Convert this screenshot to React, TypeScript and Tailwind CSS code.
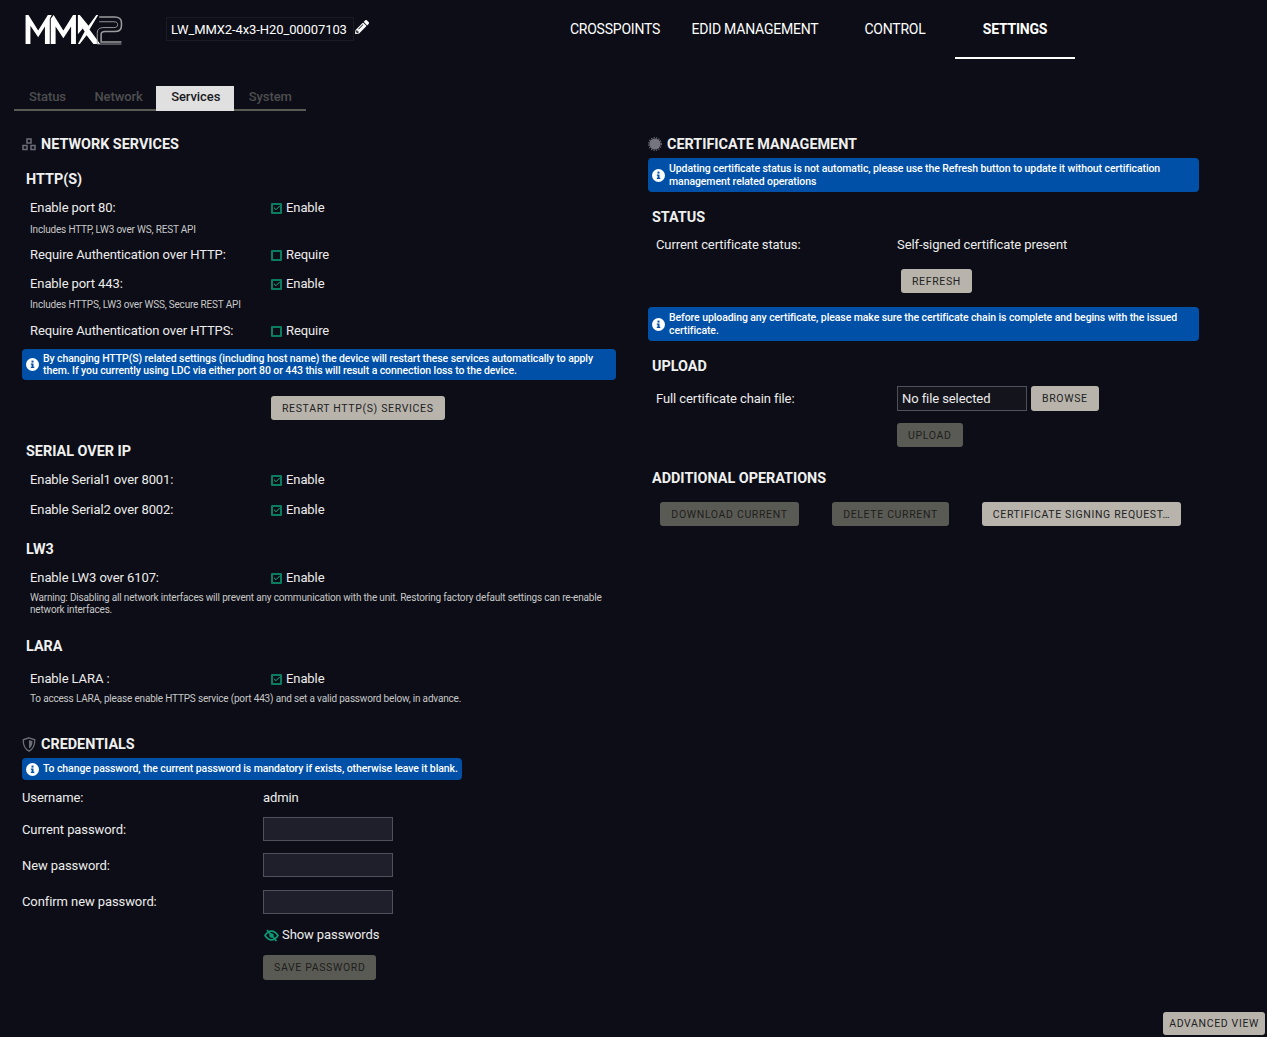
import React from 'react';
import { Check } from 'lucide-react';
import { FaPencilAlt } from 'react-icons/fa';

const NAV = [
  { label: 'CROSSPOINTS', cls: 'w-[140px]' },
  { label: 'EDID MANAGEMENT', cls: 'w-[140px]' },
  { label: 'CONTROL', cls: 'w-[130px] pl-[10px]' },
  { label: 'SETTINGS', cls: 'w-[120px] font-bold border-b-white' },
];

const TABS = ['Status', 'Network', 'Services', 'System'];

const Logo = () => (
  <svg width="100" height="31" viewBox="0 0 100 32" className="block">
    <path d="M0 31V1h3l10 16L23 1h4l-2 4v26h-5V13l-7 11-8-12v19z" fill="#fff" />
    <path d="M26 31V5l3-4 10 16L49 1h3v30h-5V13l-8 12-8-12v18z" fill="#fff" />
    <path d="M50 1h6l9 11 8-11h2L66 16l11 15h-7l-7-9-7 9h-2l7-13-2-3-5 6V1z" fill="#fff" />
    <path d="M76 3h16c5 0 7 2 7 6v3c0 4-2 6-7 6H82c-3 0-4 1-4 3v8h21" fill="none" stroke="#9a9a9f" strokeWidth="1.6" />
    <path d="M76 8h15c3 0 4 1 4 3s-1 3-4 3H81c-5 0-7 2-7 6v11h25" fill="none" stroke="#9a9a9f" strokeWidth="1" />
  </svg>
);

const NetworkIcon = () => (
  <svg width="14" height="14" viewBox="0 0 14 14" className="shrink-0" fill="none" stroke="#6b6d78" strokeWidth="1.5">
    <rect x="5" y="2" width="4" height="4" />
    <rect x="1" y="8.500" width="4" height="4" />
    <rect x="9" y="8.500" width="4" height="4" />
  </svg>
);

const ShieldIcon = () => (
  <svg width="14" height="15" viewBox="0 0 14 15" className="shrink-0">
    <path d="M7 .8l5.800 2c0 5-1.200 9.200-5.800 11.400C2.400 12 1.200 7.800 1.200 2.800z" fill="none" stroke="#6b6d78" strokeWidth="1.300" />
    <path d="M7 3l3.500 1.200C10.500 7.500 9.700 10 7 11.500z" fill="#6b6d78" />
  </svg>
);

const GearIcon = () => (
  <svg width="14" height="14" viewBox="0 0 14 14" className="shrink-0">
    <circle cx="7" cy="7" r="5.600" fill="#74757f" />
    <circle cx="7" cy="7" r="6.300" fill="none" stroke="#74757f" strokeWidth="1.200" strokeDasharray="1.200 1.300" />
  </svg>
);

const InfoDot = () => (
  <svg width="13" height="13" viewBox="0 0 13 13" className="shrink-0 mr-1">
    <circle cx="6.500" cy="6.500" r="6.500" fill="#fff" />
    <rect x="5.500" y="2.600" width="2" height="2" fill="#0050a8" />
    <path d="M4.800 5.500h2.700v3.300h.8v1.200H4.800V8.800h.8V6.700h-.8z" fill="#0050a8" />
  </svg>
);

const EyeSlash = () => (
  <svg width="15" height="13" viewBox="0 0 15 13" className="shrink-0">
    <path d="M1 6.500C3 3.500 5 2.200 7.500 2.200S12 3.500 14 6.500c-2 3-4 4.300-6.500 4.300S3 9.500 1 6.500z" fill="none" stroke="#0d9b74" strokeWidth="1.700" />
    <circle cx="7.500" cy="6.500" r="2.200" fill="#0d9b74" />
    <path d="M3 1l9.500 11" stroke="#0d9b74" strokeWidth="1.700" />
  </svg>
);

const CheckRow = ({ label, hint, text, checked, className = '', hintClass = 'mt-[6px]' }: { label: string; hint?: string; text: string; checked?: boolean; className?: string; hintClass?: string }) => (
  <div className={className}>
    <div className="flex items-center h-5 pl-2">
      <span className="w-[241px] shrink-0">{label}</span>
      <span className="w-[11px] h-[11px] border-2 border-[#0a7d60] rounded-[1px] flex items-center justify-center">
        {checked && <Check size={8} strokeWidth={3} color="#14b88a" className="shrink-0" />}
      </span>
      <span className="ml-[4px]">{text}</span>
    </div>
    {hint && <div className={`pl-2 text-[10px] leading-3 text-[#c8c8c8] tracking-[-0.18px] ${hintClass}`}>{hint}</div>}
  </div>
);

const Note = ({ children, className = '' }: { children: React.ReactNode; className?: string }) => (
  <div className={`flex items-center bg-[#0050a8] rounded-[4px] px-1 text-[10.500px] text-white font-medium tracking-[-0.09px] ${className}`}>
    <InfoDot />
    <span>{children}</span>
  </div>
);

const Btn = ({ children, disabled, className = '' }: { children: React.ReactNode; disabled?: boolean; className?: string }) => (
  <div className={`inline-flex items-center justify-center h-6 rounded-[3px] pt-px px-[11px] text-[10.500px] tracking-[0.65px] whitespace-nowrap ${disabled ? 'bg-[#5a5a54] text-[#1e1e1c]' : 'bg-[#b8b4ac] text-[#22221f]'} ${className}`}>
    {children}
  </div>
);

const Heading = ({ children, className = '' }: { children: React.ReactNode; className?: string }) => (
  <div className={`h-5 text-[14.400px] leading-[22px] font-bold tracking-normal text-[#f0f0f0] ${className}`}>{children}</div>
);

const PasswordRow = ({ label, className = '', labelClass = '' }: { label: string; className?: string; labelClass?: string }) => (
  <div className={`flex items-center h-6 ${className}`}>
    <span className={`w-[241px] shrink-0 ${labelClass}`}>{label}</span>
    <div className="w-[130px] h-6 bg-[#1e1f2b] border border-[#50505c]" />
  </div>
);

export default function App() {
  return (
    <div className="relative w-[1267px] h-[1037px] overflow-hidden bg-[#0c0d16] text-[#ececec] text-[13px] tracking-[-0.09px]" style={{ fontFamily: 'Roboto, sans-serif' }}>
      {/* top bar */}
      <header className="flex h-[59px]">
        <div className="pl-[24px] pt-[14px] w-[166px] shrink-0"><Logo /></div>
        <div className="flex items-start pt-[17px] w-[204px] shrink-0 text-white">
          <div className="w-[188px] h-6 flex items-center pl-[4px] pt-px border border-[#1a1b25] tracking-[-0.1px]">LW_MMX2-4x3-H20_00007103</div>
          <FaPencilAlt size={14} color="#fff" className="mt-[3px] ml-px" />
        </div>
        <nav className="flex ml-[175px] text-[14px] text-white tracking-[-0.22px]">
          {NAV.map(n => (
            <div key={n.label} className={`flex items-center justify-center h-[59px] border-y-2 border-y-transparent ${n.cls}`}>
              {n.label}
            </div>
          ))}
        </nav>
      </header>

      {/* tabs */}
      <div className="flex ml-[14px] mt-[27px] w-[292px] h-[25px] border-b-2 border-[#5a5a54] text-[13px] font-medium">
        {TABS.map(t => (
          <div key={t} className={`h-[25px] pl-[15px] pr-[13.500px] pb-1 flex items-center ${t === 'Services' ? 'bg-[#e0e0e0] text-[#1a1a22]' : 'text-[#4e4e50]'}`}>{t}</div>
        ))}
      </div>

      <div className="flex pt-[23px]">
        {/* left column */}
        <div className="w-[594px] ml-[22px] shrink-0">
          <div className="flex items-center gap-[5px] h-5"><NetworkIcon /><Heading>NETWORK SERVICES</Heading></div>
          <Heading className="ml-1 mt-[15px]">HTTP(S)</Heading>
          <CheckRow className="mt-[9px]" label="Enable port 80:" hint="Includes HTTP, LW3 over WS, REST API" text="Enable" checked />
          <CheckRow className="mt-[9px]" label="Require Authentication over HTTP:" text="Require" />
          <CheckRow className="mt-[9px]" label="Enable port 443:" hint="Includes HTTPS, LW3 over WSS, Secure REST API" text="Enable" checked hintClass="mt-[5px]" />
          <CheckRow className="mt-[10px]" label="Require Authentication over HTTPS:" text="Require" />
          <Note className="mt-[8px] h-[31px] leading-3">
            By changing HTTP(S) related settings (including host name) the device will restart these services automatically to apply them. If you currently using LDC via either port 80 or 443 this will result a connection loss to the device.
          </Note>
          <div className="pl-[249px] mt-4"><Btn>RESTART HTTP(S) SERVICES</Btn></div>

          <Heading className="ml-1 mt-[21px]">SERIAL OVER IP</Heading>
          <CheckRow className="mt-[9px]" label="Enable Serial1 over 8001:" text="Enable" checked />
          <CheckRow className="mt-[10px]" label="Enable Serial2 over 8002:" text="Enable" checked />

          <Heading className="ml-1 mt-[19px]">LW3</Heading>
          <CheckRow className="mt-[9px]" label="Enable LW3 over 6107:" text="Enable" checked />
          <div className="pl-2 mt-[4px] text-[10px] leading-3 text-[#c8c8c8] tracking-[-0.18px]">
            Warning: Disabling all network interfaces will prevent any communication with the unit. Restoring factory default settings can re-enable network interfaces.
          </div>

          <Heading className="ml-1 mt-[20px]">LARA</Heading>
          <CheckRow className="mt-[13px]" label="Enable LARA :" hint="To access LARA, please enable HTTPS service (port 443) and set a valid password below, in advance." text="Enable" checked hintClass="mt-[4px]" />

          <div className="flex items-center gap-[5px] h-5 mt-[29px]"><ShieldIcon /><Heading>CREDENTIALS</Heading></div>
          <Note className="mt-[4px] w-fit h-[22px]">To change password, the current password is mandatory if exists, otherwise leave it blank.</Note>
          <div className="flex items-center h-5 mt-[8px]">
            <span className="w-[241px]">Username:</span><span>admin</span>
          </div>
          <PasswordRow className="mt-[9px]" labelClass="pt-[2px]" label="Current password:" />
          <PasswordRow className="mt-3" labelClass="pt-[2px]" label="New password:" />
          <PasswordRow className="mt-[13px]" label="Confirm new password:" />
          <div className="flex items-center h-5 mt-[11px] pl-[241px]">
            <span className="ml-px"><EyeSlash /></span>
            <span className="ml-[3px]">Show passwords</span>
          </div>
          <div className="pl-[241px] mt-[10px]"><Btn disabled className="h-[25px] pt-[2px]">SAVE PASSWORD</Btn></div>
        </div>

        {/* right column */}
        <div className="w-[551px] ml-[32px] shrink-0">
          <div className="flex items-center gap-[5px] h-5"><GearIcon /><Heading>CERTIFICATE MANAGEMENT</Heading></div>
          <Note className="mt-[4px] h-[34px] leading-[13px]">Updating certificate status is not automatic, please use the Refresh button to update it without certification management related operations</Note>
          <Heading className="ml-1 mt-[15px]">STATUS</Heading>
          <div className="flex items-center h-5 pl-2 mt-[8px]">
            <span className="w-[241px]">Current certificate status:</span><span>Self-signed certificate present</span>
          </div>
          <div className="pl-[253px] mt-[14px]"><Btn>REFRESH</Btn></div>
          <Note className="mt-[14px] h-[34px] leading-[13px]">Before uploading any certificate, please make sure the certificate chain is complete and begins with the issued certificate.</Note>
          <Heading className="ml-1 mt-[15px]">UPLOAD</Heading>
          <div className="flex items-center h-6 pl-2 mt-[10px]">
            <span className="w-[241px] shrink-0 pt-[2px]">Full certificate chain file:</span>
            <div className="w-[130px] h-[25px] flex items-center pl-[4px] pt-[2px] bg-[#14151c] border border-[#50505c]">No file selected</div>
            <Btn className="ml-1 h-[25px]">BROWSE</Btn>
          </div>
          <div className="pl-[249px] mt-[13px]"><Btn disabled>UPLOAD</Btn></div>
          <Heading className="ml-1 mt-[21px]">ADDITIONAL OPERATIONS</Heading>
          <div className="flex pl-3 mt-[14px]">
            <Btn disabled className="w-[139px]">DOWNLOAD CURRENT</Btn>
            <Btn disabled className="ml-[33px] w-[117px]">DELETE CURRENT</Btn>
            <Btn className="ml-[33px] w-[199px]">CERTIFICATE SIGNING REQUEST…</Btn>
          </div>
        </div>
      </div>

      <Btn className="absolute right-[2px] bottom-[2px] h-[23px] !px-[6px]">ADVANCED VIEW</Btn>
    </div>
  );
}
